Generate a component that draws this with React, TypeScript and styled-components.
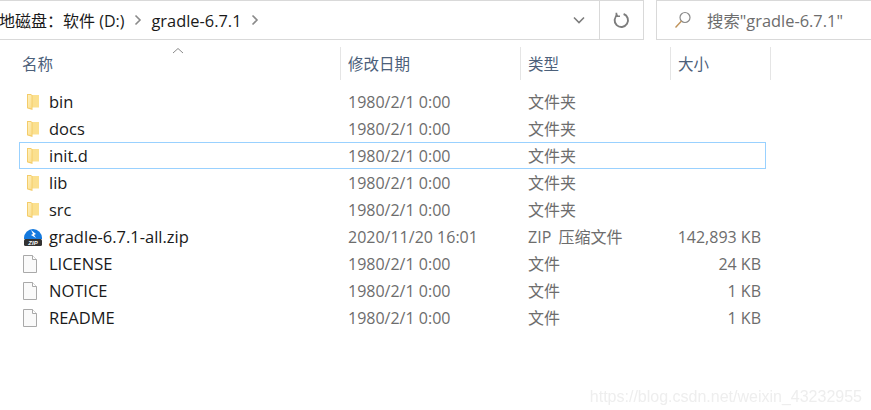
import React from "react";
import styled, { createGlobalStyle } from "styled-components";

const Global = createGlobalStyle`
  html, body { margin: 0; padding: 0; background: #fff; }
  body { font-family: "Open Sans", "Noto Sans CJK SC", sans-serif; }
`;

const Page = styled.div`
  position: relative;
  width: 871px;
  height: 410px;
  overflow: hidden;
  background: #fff;
  display: flex;
  flex-direction: column;
`;

const TopBar = styled.div`
  display: flex;
  height: 40px;
  flex: none;
`;

const AddressBar = styled.div`
  width: 644px;
  flex: none;
  box-sizing: border-box;
  border: 1px solid #d9d9d9;
  border-width: 1px 1px 1px 0;
  display: flex;
  align-items: center;
`;

const Crumbs = styled.div`
  flex: 1;
  display: flex;
  align-items: center;
  overflow: hidden;
  font-size: 16px;
  color: #1a1a1a;
  white-space: nowrap;
`;

const CrumbText = styled.span<{ $clip?: boolean; $latin?: boolean }>`
  margin-left: ${(p) => (p.$clip ? "-1px" : "0")};
  font-size: ${(p) => (p.$latin ? "16.4px" : "16px")};
`;

const CrumbSep = styled.span`
  display: flex;
  width: 27px;
  justify-content: center;
  align-items: center;
`;

const AddressButton = styled.div<{ $w: number }>`
  width: ${(p) => p.$w}px;
  height: 100%;
  flex: none;
  display: flex;
  align-items: center;
  justify-content: center;
`;

const Divided = styled(AddressButton)`
  border-left: 1px solid #d9d9d9;
`;

const SearchBox = styled.div`
  margin-left: 12px;
  flex: 1;
  box-sizing: border-box;
  border: 1px solid #d9d9d9;
  border-width: 1px 0 1px 1px;
  display: flex;
  align-items: center;
  padding-left: 17px;
  gap: 15px;
  font-size: 16.4px;
  color: #6d6d6d;
  white-space: nowrap;
`;

const Header = styled.div`
  position: relative;
  display: flex;
  height: 33px;
  margin-top: 7px;
  flex: none;
`;

const SortCaret = styled.svg`
  position: absolute;
  left: 172px;
  top: 0;
`;

const HeadCell = styled.div<{ $w: number; $first?: boolean }>`
  width: ${(p) => p.$w}px;
  box-sizing: border-box;
  flex: none;
  padding-left: ${(p) => (p.$first ? "22px" : "7px")};
  border-right: 1px solid #e5e5e5;
  display: flex;
  align-items: center;
  font-size: 15.5px;
  color: #4c607a;
`;

const Rows = styled.div`
  margin-top: 8px;
  display: flex;
  flex-direction: column;
`;

const Row = styled.div<{ $focus?: boolean }>`
  position: relative;
  height: 27px;
  display: flex;
  align-items: center;
  font-size: 16px;
  color: #6d6d6d;
  width: 766px;
  &::before {
    content: "";
    display: ${(p) => (p.$focus ? "block" : "none")};
    position: absolute;
    left: 19px;
    right: 0;
    top: 0;
    bottom: 0;
    border: 1px solid #99d1ff;
  }
`;

const NameCell = styled.div`
  width: 348px;
  flex: none;
  display: flex;
  align-items: center;
  color: #1a1a1a;
  font-size: 16.5px;
`;

const IconSlot = styled.div`
  width: 26px;
  margin-left: 23px;
  flex: none;
  display: flex;
  align-items: center;
`;

const DateCell = styled.div`
  width: 180px;
  flex: none;
`;

const TypeCell = styled.div`
  width: 130px;
  flex: none;
  margin-top: -2px;
  word-spacing: 3px;
`;

const SizeCell = styled.div`
  width: 103px;
  flex: none;
  text-align: right;
`;

const Watermark = styled.div`
  position: absolute;
  right: 9px;
  bottom: 4px;
  font-family: "Liberation Sans", sans-serif;
  font-size: 16px;
  color: #eeeeee;
  filter: blur(0.6px);
  white-space: nowrap;
`;

const Chevron = () => (
  <svg width="8" height="12" viewBox="0 0 8 12">
    <path d="M1.5 1.5 6 6l-4.5 4.5" fill="none" stroke="#8a8a8a" strokeWidth="1.6" />
  </svg>
);

const Folder = () => (
  <svg width="18" height="18" viewBox="0 0 18 18">
    <defs>
      <linearGradient id="fg" x1="0" y1="0" x2="1" y2="1">
        <stop offset="0" stopColor="#fff0bd" />
        <stop offset="1" stopColor="#fbdf8e" />
      </linearGradient>
    </defs>
    <path d="M9 2h7v12.500H9z" fill="#fbe08f" />
    <path d="M4 1h4l1.500 1.500V17L4.500 15.500 4 15z" fill="#f4cc6a" />
    <path d="M5 2h3l.6.8v12.500L5 14.400z" fill="url(#fg)" />
  </svg>
);

const FileIcon = () => (
  <svg width="14" height="18" viewBox="0 0 14 18">
    <path d="M.5.500h9l4 4v13H.5z" fill="#fafafa" stroke="#a9a9a9" />
    <path d="M9.500.500v4h4" fill="#fff" stroke="#a9a9a9" />
  </svg>
);

const ZipIcon = () => (
  <svg width="20" height="20" viewBox="0 0 20 20">
    <path d="M1 11a9 9 0 0 1 18 0v1H1z" fill="#1479de" />
    <path d="M8 3l5 4-2 1 2 3-5-3 2-1z" fill="#fff" />
    <rect x="1" y="12" width="18" height="7" rx="1.500" fill="#333" />
    <text x="10" y="18" textAnchor="middle" fontSize="6" fontWeight="700" fontStyle="italic" fill="#fff" fontFamily="Liberation Sans">ZIP</text>
  </svg>
);

const MagnifierIcon = () => (
  <svg width="18" height="18" viewBox="0 0 18 18">
    <circle cx="11" cy="6.500" r="5" fill="none" stroke="#8a8a8a" strokeWidth="1.200" />
    <path d="M7.500 10 1.500 16.500" stroke="#c0935a" strokeWidth="1.400" />
  </svg>
);

const RefreshIcon = () => (
  <svg width="17" height="17" viewBox="0 0 16 16">
    <path d="M4.300 2.600A6.300 6.300 0 1 0 10 1.900" fill="none" stroke="#7d7d7d" strokeWidth="1.800" />
    <path d="M3.200 .6v3.400h3.400" fill="none" stroke="#7d7d7d" strokeWidth="1.600" />
  </svg>
);

const DownIcon = () => (
  <svg width="12" height="8" viewBox="0 0 12 8">
    <path d="M1 1.500 6 6.500l5-5" fill="none" stroke="#7d7d7d" strokeWidth="1.600" />
  </svg>
);

type Item = { name: string; date: string; type: string; size?: string; kind: "folder" | "zip" | "file"; focus?: boolean };

const items: Item[] = [
  { name: "bin", date: "1980/2/1 0:00", type: "文件夹", kind: "folder" },
  { name: "docs", date: "1980/2/1 0:00", type: "文件夹", kind: "folder" },
  { name: "init.d", date: "1980/2/1 0:00", type: "文件夹", kind: "folder", focus: true },
  { name: "lib", date: "1980/2/1 0:00", type: "文件夹", kind: "folder" },
  { name: "src", date: "1980/2/1 0:00", type: "文件夹", kind: "folder" },
  { name: "gradle-6.7.1-all.zip", date: "2020/11/20 16:01", type: "ZIP 压缩文件", size: "142,893 KB", kind: "zip" },
  { name: "LICENSE", date: "1980/2/1 0:00", type: "文件", size: "24 KB", kind: "file" },
  { name: "NOTICE", date: "1980/2/1 0:00", type: "文件", size: "1 KB", kind: "file" },
  { name: "README", date: "1980/2/1 0:00", type: "文件", size: "1 KB", kind: "file" },
];

const icons = { folder: <Folder />, zip: <ZipIcon />, file: <FileIcon /> };

export default function App() {
  return (
    <Page>
      <Global />
      <TopBar>
        <AddressBar>
          <Crumbs>
            <CrumbText $clip>地磁盘：软件 (D:)</CrumbText>
            <CrumbSep><Chevron /></CrumbSep>
            <CrumbText $latin>gradle-6.7.1</CrumbText>
            <CrumbSep><Chevron /></CrumbSep>
          </Crumbs>
          <AddressButton $w={40}><DownIcon /></AddressButton>
          <Divided $w={43}><RefreshIcon /></Divided>
        </AddressBar>
        <SearchBox>
          <MagnifierIcon />
          <span>搜索"gradle-6.7.1"</span>
        </SearchBox>
      </TopBar>
      <Header>
        <SortCaret width="12" height="7" viewBox="0 0 12 7">
          <path d="M1 6l5-4.500L11 6" fill="none" stroke="#8a8a8a" />
        </SortCaret>
        <HeadCell $w={341} $first>名称</HeadCell>
        <HeadCell $w={180}>修改日期</HeadCell>
        <HeadCell $w={150}>类型</HeadCell>
        <HeadCell $w={100}>大小</HeadCell>
      </Header>
      <Rows>
        {items.map((it) => (
          <Row key={it.name} $focus={it.focus}>
            <NameCell>
              <IconSlot>{icons[it.kind]}</IconSlot>
              {it.name}
            </NameCell>
            <DateCell>{it.date}</DateCell>
            <TypeCell>{it.type}</TypeCell>
            <SizeCell>{it.size}</SizeCell>
          </Row>
        ))}
      </Rows>
      <Watermark>https://blog.csdn.net/weixin_43232955</Watermark>
    </Page>
  );
}
